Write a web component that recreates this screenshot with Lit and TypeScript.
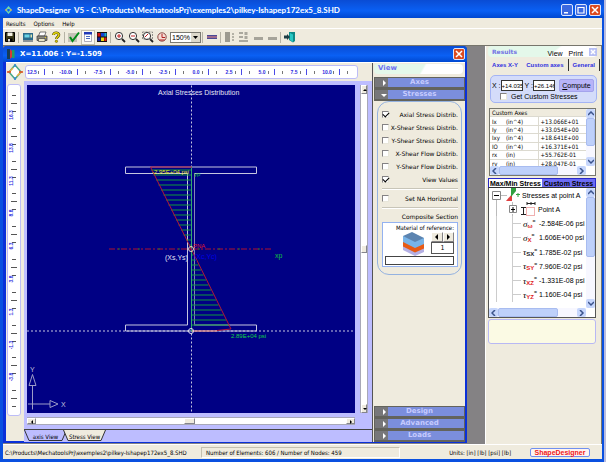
import { LitElement, html, svg, css } from "lit";
import { customElement, property } from "lit/decorators.js";
import { classMap } from "lit/directives/class-map.js";

const range = (n: number) => Array.from({ length: n }, (_, i) => i);
const STEP = 32.8;

const base = css`
  * { box-sizing: border-box; }
  button, input, select {
    font: inherit; color: inherit; margin: 0; padding: 0; border: 0;
    background: none; border-radius: 0; outline: 0;
  }
  svg { display: block; }
`;

const checkbox = css`
  input[type="checkbox"] {
    appearance: none; width: 7px; height: 7px; flex: none; background: #fff;
    border: 1px solid; border-color: #848284 #e8e6da #e8e6da #848284;
    display: grid; place-items: center;
  }
  input[type="checkbox"]:checked::before {
    content: ""; width: 5px; height: 3px; margin-top: -1px;
    border-left: 1px solid #000; border-bottom: 1px solid #000;
    transform: rotate(-45deg);
  }
`;

const lens = (inner: unknown) => svg`
  <circle cx="5" cy="5" r="3.6" fill="#fff" stroke="#333" stroke-width="1"/>
  <path d="M8 8l3 3" stroke="#222" stroke-width="1.8"/>${inner}`;

const icons: Record<string, unknown> = {
  save: svg`<path d="M1.500 1.500h9v9h-9z" fill="#3a3818" stroke="#000"/><path d="M3.500 1.500h5v3.500h-5z" fill="#f4f2e4"/><path d="M3.500 7.500h5v3h-5z" fill="#000"/><path d="M4 8h2v2.500H4z" fill="#ddd"/>`,
  screen: svg`<path d="M1 2h10v7H1z" fill="#2a6a8c"/><path d="M2.500 3.500h5v3h-5z" fill="#69d4e6"/><path d="M8.500 3.500h1.500v3H8.500z" fill="#dfe8b0"/><path d="M1 9.500h10v1H1z" fill="#26394f"/>`,
  print: svg`<path d="M4 1h6L8.500 5H2.500z" fill="#fff" stroke="#444" stroke-width=".7"/><path d="M1 5h10v4.500H1z" fill="#8c8a80" stroke="#333" stroke-width=".7"/><path d="M2.500 7.500h6.500v3H2.500z" fill="#e8e4c8" stroke="#333" stroke-width=".6"/><path d="M9 6h1v1H9z" fill="#e8d020"/>`,
  help: svg`<path d="M3.500 4C3.500 1 9 1 9 3.800 9 5.600 6.400 5.800 6.400 8" fill="none" stroke="#4a4200" stroke-width="2.600"/><path d="M3.500 4C3.500 1 9 1 9 3.800 9 5.600 6.400 5.800 6.400 8" fill="none" stroke="#e8dc10" stroke-width="1.400"/><circle cx="6.400" cy="10.300" r="1.200" fill="#d8c800" stroke="#4a4200" stroke-width=".5"/>`,
  check: svg`<path d="M0 2h9v9H0z" fill="#c4c2b6"/><path d="M2 6l2.500 4L11 1.500" fill="none" stroke="#008a18" stroke-width="2"/>`,
  doc: svg`<path d="M2.500 1.500h7v9h-7z" fill="#fff" stroke="#9a98a8" stroke-width=".8"/><path d="M2 1h8v2.500H2z" fill="#2038b8"/><path d="M4 5h4v1H4zM4 7h4v1H4z" fill="#4a6ac0"/>`,
  colors: svg`<path d="M1 1h10v10H1z" fill="#111"/><path d="M1.500 2h3v3.500h-3z" fill="#d01010"/><path d="M5 2h3v3.500H5z" fill="#1040d8"/><path d="M8.300 2h2.200v3.500H8.300z" fill="#18a8d8"/><path d="M1.500 6.500h3V10h-3z" fill="#1020a0"/><path d="M5 6.500h3V10H5z" fill="#e8d810"/><path d="M8.300 6.500h2.200V10H8.300z" fill="#e02010"/>`,
  zoomIn: lens(svg`<path d="M3 5h4M5 3v4" stroke="#c02020"/>`),
  zoomOut: lens(svg`<path d="M3 5h4" stroke="#c02020"/>`),
  zoomBox: lens(svg`<path d="M0.500 1h10v7h-10z" fill="none" stroke="#666" stroke-width=".7" stroke-dasharray="2 1"/><path d="M3 6l3-3" stroke="#c02020"/>`),
  zoomAll: svg`<circle cx="6" cy="6" r="4.200" fill="#f6dcd4" stroke="#8a4a44" stroke-width="1"/><path d="M6 3v3.500h3M3.500 9h5" fill="none" stroke="#b02020"/>`,
  beam: svg`<path d="M1 4h10v4H1z" fill="#4a4a98"/><path d="M1 5.500h10v1H1z" fill="#f08880"/>`,
  alignA: svg`<path d="M1 1h5v10H1z" fill="#9c9a90"/><path d="M8 2h2v2H8zM8 5h2v2H8zM8 8h2v2H8z" fill="#b4b2a6"/>`,
  alignB: svg`<path d="M1 1h4v2H1zM1 5h4v2H1zM1 9h9v2H1zM6.500 1h3v3h-3zM6.500 5h3v3h-3z" fill="#aaa89e"/>`,
  flat: svg`<path d="M2 6h9v3H2z" fill="#a6a49a"/>`,
  exit: svg`<path d="M5 1h6v9l-2 1.500L5 9z" fill="#0c8a88"/><path d="M6 2l3 1.500v7.500L6 9z" fill="#28c8c4"/><path d="M0 4.500h3V3l3 3-3 3V7.500H0z" fill="#1c3c44"/>`,
};

@customElement("tool-bar")
class ToolBar extends LitElement {
  static styles = [base, css`
    :host { display: flex; align-items: center; height: 17px; background: #efebde; border-top: 1px solid #fff; }
    button { width: 14px; height: 15px; display: grid; place-items: center; flex: none; }
    .on { background: #faf8f2; border: 1px solid #c4c0b0; }
    .sep { width: 1px; height: 11px; margin: 0 2px 0 1px; background: #b5b2a5; flex: none; }
    .zoom { display: flex; width: 31px; height: 11px; margin-left: 1px; border: 1px solid #7b7a72; background: #fff; flex: none; }
    select { appearance: none; flex: 1; min-width: 0; padding-left: 1px; font: 7px/9px "Liberation Sans", sans-serif; }
    .arrow { width: 9px; background: #ddd9cb; display: grid; place-items: center; }
  `];
  private items: (string[] | null)[] = [
    ["save", "Save"], null, ["screen", "Screen"], ["print", "Print"], ["help", "Help"], null,
    ["check", "Check"], ["doc", "Report"], ["colors", "Colors"], null,
    ["zoomIn", "Zoom in"], ["zoomOut", "Zoom out"], ["zoomBox", "Zoom window"], ["zoomAll", "Zoom all"], ["select"], null,
    ["beam", "Beam"], null, ["alignA", "Columns"], ["alignB", "List"], ["flat", "Top"], ["flat", "Bottom"], null, ["exit", "Exit"],
  ];
  render() {
    return this.items.map((it) => {
      if (!it) return html`<span class="sep"></span>`;
      if (it[0] === "select") return html`<span class="zoom"><select aria-label="Zoom level"><option>150%</option><option>100%</option></select>
        <span class="arrow"><svg width="5" height="3"><path d="M0 0h5L2.500 3z"/></svg></span></span>`;
      return html`<button class=${classMap({ on: it[0] === "doc" })} aria-label=${it[1]}><svg width="12" height="12" viewBox="0 0 12 12">${icons[it[0]]}</svg></button>`;
    });
  }
}

@customElement("stress-canvas")
class StressCanvas extends LitElement {
  static styles = [base, css`
    :host { display: block; background: #000084; overflow: hidden; min-height: 0; }
    svg { width: 100%; height: 100%; font-family: "Liberation Sans", Arial, sans-serif; font-size: 7px; }
    .value { font-size: 6px; }
  `];
  render() {
    const upper = range(16).map((i) => 169 + i * 5);
    const lower = range(15).map((i) => 254 + i * 5);
    return html`<svg viewBox="27 85 328 327">
      <g fill="none" stroke="#c6c6e0" stroke-width="1">
        <path d="M191.500 85v327M27 330.500h328" stroke-dasharray="2 2"/>
        <path d="M125.500 166.500h131v6.500H194.500V324.500h62v6h-131v-6H187.500V173h-62z"/>
        <path d="M194.500 173v152" stroke="#8484b4"/>
      </g>
      <g stroke="#10983c" stroke-width="1">
        <path d="M191.500 166v165" stroke="#30a870"/>
        ${upper.map((y) => svg`<path d=${`M${191 - (249 - y) * 0.5} ${y + 0.5}H191`}/>`)}
        ${lower.map((y) => svg`<path d=${`M192 ${y + 0.5}H${191 + (y - 249) * 0.5}`}/>`)}
      </g>
      <path d="M192 166.500H150.500L231 328.500l-14 1.500" fill="none" stroke="#b01838"/>
      <path d="M192 330.500h25" stroke="#f08070"/>
      <path d="M109 248.500h164" stroke="#b01030" stroke-dasharray="6 2 2 2"/>
      <path d="M118 248.500h155" stroke="#108030" stroke-dasharray="2 18"/>
      <circle cx="191" cy="248.500" r="2.500" fill="none" stroke="#e0d0c0"/>
      <circle cx="191" cy="330.500" r="2.500" fill="none" stroke="#e0e0f0"/>
      <text x="158" y="94" fill="#e4e4f4">Axial Stresses Distribution</text>
      <text class="value" x="152" y="173" fill="#e4f020">-2.95E+04 psi</text>
      <text class="value" x="194" y="175" fill="#10c040">yp</text>
      <text class="value" x="193" y="247" fill="#e01830">PNA</text>
      <text x="165" y="259" fill="#e4e4f4">(Xs,Ys)</text>
      <text x="194" y="258" fill="#0000e8">(Xc,Yc)</text>
      <text x="275" y="257" fill="#10c040">xp</text>
      <text class="value" x="231" y="337" fill="#10d048">2.89E+04 psi</text>
      <g fill="none" stroke="#9c9cc8">
        <path d="M32.500 409V385M29 385l3.500-11 3.500 11zM28 403.500h22M50 400v7l8-3.500z"/>
      </g>
      <text x="30" y="371" fill="#c0c0dc">Y</text>
      <text x="61" y="406" fill="#c0c0dc">X</text>
    </svg>`;
  }
}

@customElement("axis-ruler")
class AxisRuler extends LitElement {
  @property({ type: Boolean }) vertical = false;
  static styles = [base, css`
    :host { display: block; background: #fff; border: 1px solid #bdbdf7; border-radius: 3px; overflow: hidden; }
    text { font: bold 5px "Liberation Sans", sans-serif; fill: #2a2ae0; text-anchor: middle; }
  `];
  render() {
    if (this.vertical) {
      const labels = ["16.3", "13.8", "11.3", "8.8", "6.3", "3.8", "1.3", "-1.3", "-3.8"];
      return html`<svg width="12" height="330">
        ${range(10).map((i) => { const y = 18 + Math.round(i * STEP); return svg`<path d=${`M3 ${y + 0.5}h6M4 ${y - 7.5}h4M4 ${y + 8.5}h4`} stroke="#555"/>`; })}
        ${labels.map((t, i) => svg`<text transform=${`translate(5 ${30 + Math.round(i * STEP)}) rotate(-90)`}>${t}</text>`)}
      </svg>`;
    }
    const labels = ["12.5", "-10.0", "-7.5", "-5.0", "-2.5", "0.0", "2.5", "5.0", "7.5", "10.0"];
    return html`<svg width="330" height="12">
      ${range(10).map((i) => { const x = 18 + Math.round(i * STEP); return svg`<path d=${`M${x + 0.5} 3v6`} stroke="#4a4ae8"/><path d=${`M${x + 8.5} 5v3M${x - 5.5} 5v3`} stroke="#777"/>`; })}
      ${labels.map((t, i) => svg`<text x=${6 + Math.round(i * STEP)} y="8">${t}</text>`)}
    </svg>`;
  }
}

@customElement("view-panel")
class ViewPanel extends LitElement {
  static styles = [base, checkbox, css`
    :host { display: flex; flex-direction: column; background: #efebde; font: 6px/9px "DejaVu Sans Condensed", "Noto Sans", sans-serif; padding: 1px 0 0 1px; }
    h2 { margin: 0 2px 3px 0; height: 10px; padding-left: 4px; font: bold 7px/9px "DejaVu Sans", sans-serif; color: #7070f0; background: linear-gradient(120deg, #e4f8ea 44px, #fff 46px); border-radius: 4px; }
    .bar { height: 12px; width: 100%; flex: none; display: flex; align-items: center; background: #7b8edc; border: 1px solid #63635c; border-bottom-width: 2px; color: #c6cbff; font: bold 7px/9px "DejaVu Sans", sans-serif; }
    .bar .grip { width: 13px; align-self: stretch; background: #77777a; display: grid; place-items: center; padding-left: 4px; }
    .bar .name { flex: 1; text-align: center; padding-right: 13px; }
    .group { margin: 0 3px; padding: 6px 3px 7px 4px; border: 1px solid #94b2e0; border-radius: 12px; }
    .row { display: flex; align-items: center; justify-content: space-between; height: 13px; white-space: nowrap; font-family: "DejaVu Sans", sans-serif; }
    hr { border: 0; border-top: 1px solid #c8c5b8; border-bottom: 1px solid #fff; margin: 2px 0; }
    .cap { text-align: right; height: 9px; margin: 3px 0 1px; font-family: "DejaVu Sans", sans-serif; }
    .mat { height: 45px; border: 1px solid #94b2f0; background: #fff; padding: 1px 3px 2px 2px; display: flex; flex-direction: column; }
    .mat .t { line-height: 8px; text-align: right; white-space: nowrap; }
    .mid { display: flex; justify-content: flex-end; gap: 6px; flex: 1; }
    .spin { width: 23px; display: grid; grid-template-columns: 1fr 1fr; grid-template-rows: 10px 12px; }
    .spin button { background: #efebde; border: 1px solid; border-color: #fff #848284 #848284 #fff; display: grid; place-items: center; }
    .spin input { grid-column: 1 / 3; width: 100%; min-width: 0; border: 1px solid #555; text-align: center; font-size: 7px; }
    .name-box { width: 100%; height: 9px; border: 1px solid #444; flex: none; }
    .fill { flex: 1; }
  `];
  private bar(name: string, open = false) {
    return html`<button class="bar"><span class="grip"><svg width="6" height="6"><path d=${open ? "M0 2h6L3 5z" : "M2 0v6l3-3z"} fill="#fff"/></svg></span><span class="name">${name}</span></button>`;
  }
  render() {
    const opts: [string, boolean][] = [["Axial Stress Distrib.", true], ["X-Shear Stress Distrib.", false], ["Y-Shear Stress Distrib.", false], ["X-Shear Flow Distrib.", false], ["Y-Shear Flow Distrib.", false], ["View Values", true]];
    return html`<h2>View</h2>
      ${this.bar("Axes")}${this.bar("Stresses", true)}
      <div class="group">
        ${opts.map(([t, c]) => html`<label class="row"><input type="checkbox" .checked=${c}>${t}</label>`)}
        <hr><label class="row"><input type="checkbox">Set NA Horizontal</label><hr>
        <div class="cap">Composite Section</div>
        <div class="mat">
          <div class="t">Material of reference:</div>
          <div class="mid">
            <svg width="24" height="24" viewBox="0 0 24 24">
              <path d="M2 13v5l12 6 9-4v-5l-9 3z" fill="#b4b0e4"/>
              <path d="M2 9v5.500l12 6 9-4V12z" fill="#e85a14"/>
              <path d="M2 4v6l12 6 9-4V6z" fill="#78b4e8"/>
              <path d="M2 4l9-4 12 6-9 4z" fill="#5c84b0"/>
            </svg>
            <div class="spin">
              <button aria-label="Previous"><svg width="3" height="6"><path d="M3 0v6L0 3z"/></svg></button>
              <button aria-label="Next"><svg width="3" height="6"><path d="M0 0v6l3-3z"/></svg></button>
              <input aria-label="Material number" value="1">
            </div>
          </div>
          <input class="name-box" aria-label="Material name">
        </div>
      </div>
      <div class="fill"></div>
      ${["Design", "Advanced", "Loads"].map((n) => this.bar(n))}`;
  }
}

@customElement("scroll-strip")
class ScrollStrip extends LitElement {
  @property({ type: Boolean }) vertical = false;
  @property({ type: Boolean }) classic = false;
  @property({ type: Number }) before = 0;
  @property({ type: Number }) size = 50;
  static styles = [base, css`
    :host { display: flex; background: #f7f7ff; height: 9px; flex: none; }
    :host([vertical]) { flex-direction: column; width: 9px; height: auto; }
    button { flex: none; width: 9px; height: 9px; background: #c6d6fc; border-radius: 2px; display: grid; place-items: center; }
    .track { flex: 1; display: flex; flex-direction: inherit; min-height: 0; }
    .thumb { background: #bed0fa; border: 1px solid #a8bcf0; border-radius: 2px; }
    :host([classic]) { background: #fff; height: 8px; border: 1px solid #a8a8b8; border-width: 1px 0; }
    :host([classic][vertical]) { width: 8px; height: auto; border-width: 0 1px; }
    :host([classic]) button, :host([classic]) .thumb { background: #efebde; border: 1px solid; border-color: #fff #84848c #84848c #fff; border-radius: 0; }
    :host([classic]) button { height: 100%; }
    :host([classic][vertical]) button { width: 100%; height: 9px; }
  `];
  private tip(back: boolean) {
    const soft = ["M0 4l3-3 3 3", "M0 1l3 3 3-3", "M4 0L1 3l3 3", "M1 0l3 3-3 3"];
    const hard = ["M1 4h4L3 2z", "M1 2h4L3 4z", "M4 1v4L2 3z", "M2 1v4l2-2z"];
    const k = (this.vertical ? 0 : 2) + (back ? 0 : 1);
    return this.classic
      ? html`<svg width="6" height="6"><path d=${hard[k]}/></svg>`
      : html`<svg width="6" height="6"><path d=${soft[k]} fill="none" stroke="#3c548c" stroke-width="1.500"/></svg>`;
  }
  render() {
    return html`<button aria-label="Scroll back">${this.tip(true)}</button>
      <div class="track"><span style="flex:${this.before}"></span><span class="thumb" style="flex:${this.size}"></span><span style="flex:${100 - this.before - this.size}"></span></div>
      <button aria-label="Scroll forward">${this.tip(false)}</button>`;
  }
}

@customElement("results-dock")
class ResultsDock extends LitElement {
  static styles = [base, checkbox, css`
    :host { display: flex; flex-direction: column; background: #efebde; border-left: 1px solid #fff; border-right: 1px solid #77776e; padding: 0 4px 0 2px; font: 7px/9px "Liberation Sans", Arial, sans-serif; }
    header { display: flex; align-items: center; height: 11px; flex: none; padding: 0 0 0 4px; gap: 6px; border-radius: 4px; background: linear-gradient(140deg, #e4f8ea 46px, #fff 48px); }
    h2 { margin: 0; flex: 1; font: bold 6px/9px "DejaVu Sans", sans-serif; color: #7474e4; }
    header button { padding-top: 4px; }
    .x { width: 8px; height: 8px; padding: 1px; background: #b8c0f4; }
    header .x { padding-top: 1px; }
    .tabs { display: flex; height: 16px; flex: none; align-items: stretch; margin: 0 -3px 2px 0; font: bold 6px/12px "Liberation Sans", sans-serif; color: #3030e0; }
    .tabs button { flex: 1 1 auto; white-space: nowrap; border-right: 1px solid #333; margin: 2px 0; }
    .tabs button:first-child { border: 0; }
    .form { margin: 0 0 5px 2px; padding: 3px 2px 2px 1px; height: 28px; flex: none; border: 1px solid #a4b4f4; border-radius: 5px; background: #d4dcfa; display: grid; grid-template-columns: 1fr 35px; }
    .xy { display: flex; align-items: center; gap: 2px; white-space: nowrap; }
    .xy label { display: flex; align-items: center; }
    .xy input { width: 22px; height: 11px; background: #fff; border: 1px solid #333; font-size: 6px; min-width: 0; }
    .go { background: #b8b4f8; border: 1px solid #a4a4ec; border-radius: 2px; height: 13px; }
    .get { grid-column: 1 / 3; display: flex; align-items: center; gap: 4px; padding-left: 8px; white-space: nowrap; }
    .grid { height: 68px; flex: none; margin: 0 1px 2px 1px; border: 1px solid #77776e; background: #fff; display: grid; grid-template-columns: 1fr 9px; grid-template-rows: 1fr 9px; }
    .clip { overflow: hidden; min-height: 0; }
    table { width: 100%; height: 59px; border-collapse: collapse; font: 6px/7px "DejaVu Sans Condensed", "Noto Sans", sans-serif; }
    td, th { padding: 0 0 0 2px; text-align: left; font-weight: normal; border-bottom: 1px solid #dcdad0; white-space: nowrap; }
    th { background: #efebde; }
    td:nth-child(1) { width: 14px; } td:nth-child(2) { width: 34px; border-right: 1px solid #dcdad0; }
    .two { display: flex; height: 10px; flex: none; margin: 0 1px 0 0; font: bold 7px/9px "Liberation Sans", sans-serif; border: 1px solid #2828c8; border-bottom-color: #333; }
    .two button { flex: 1; white-space: nowrap; background: #fff; }
    .two button + button { background: #6c6cf4; }
    .tree { height: 130px; flex: none; margin: 0 1px 1px 0; border: 1px solid #555; border-top: 0; background: #fff; display: grid; grid-template-columns: 1fr 9px; grid-template-rows: 1fr 9px; }
    .nodes { display: flex; flex-direction: column; min-width: 0; padding-bottom: 6px; overflow: hidden; }
    .nodes div { flex: 1; min-height: 0; display: flex; align-items: center; white-space: nowrap; }
    .nodes svg { flex: none; }
    .note { height: 25px; flex: none; margin-right: 1px; border: 1px solid #b8b8f4; border-radius: 3px; background: #fbfae4; }
    .sym { width: 16px; flex: none; font: italic 9px/10px "Liberation Serif", serif; display: flex; align-items: center; }
    .sub { font: bold 6px/7px "Liberation Sans", sans-serif; color: #e02020; padding-top: 5px; }
    .sub.dark { color: #222; }
    .eq { font: bold 5px/7px "Liberation Sans", sans-serif; padding-bottom: 4px; }
  `];
  render() {
    const rows = [["Ix", "(in^4)", "+13.066E+01"], ["Iy", "(in^4)", "+33.054E+00"], ["Ixy", "(in^4)", "+18.641E+00"], ["IO", "(in^4)", "+16.371E+01"], ["rx", "(in)", "+55.762E-01"], ["ry", "(in)", "+28.047E-01"]];
    const vals = [["σ", "ω", "-2.584E-06 psi"], ["σ", "X", "1.606E+00 psi"], ["τ", "SX", "1.785E-02 psi"], ["τ", "SY", "7.960E-02 psi"], ["τ", "XZ", "-1.331E-08 psi"], ["τ", "YZ", "1.160E-04 psi"]];
    return html`
      <header><h2>Results</h2><button>View</button><button>Print</button><button class="x" aria-label="Close"><svg width="6" height="6"><path d="M1 1l4 4M5 1L1 5" stroke="#fff" stroke-width="1.500"/></svg></button></header>
      <nav class="tabs"><button>Axes X-Y</button><button>Custom axes</button><button>General</button></nav>
      <div class="form">
        <div class="xy"><label>X :<input value="+14.035"></label><label>Y :<input value="+26.146"></label></div>
        <button class="go"><u>C</u>ompute</button>
        <label class="get"><input type="checkbox">Get Custom Stresses</label>
      </div>
      <div class="grid">
        <div class="clip"><table><tr><th colspan="3">Custom Axes</th></tr>${rows.map((r) => html`<tr>${r.map((c) => html`<td>${c}</td>`)}</tr>`)}</table></div>
        <scroll-strip vertical .before=${0} .size=${70}></scroll-strip>
        <scroll-strip .before=${0} .size=${75}></scroll-strip>
      </div>
      <div class="two"><button>Max/Min Stress</button><button>Custom Stress</button></div>
      <div class="tree">
        <div class="nodes">
          <div><svg width="33" height="14"><path d="M7.500 11v3M12 7.500h6" stroke="#bbb"/><path d="M3.500 3.500h8v8h-8z" fill="#fff" stroke="#888"/><path d="M5 7.500h5" stroke="#000"/><path d="M17 13l6-7v7z" fill="#e04040"/><path d="M22 0h5v3l-5 6z" fill="#30a040"/><path d="M27 6.500h4M29 5v4" stroke="#30a040"/></svg>Stresses at point A</div>
          <div><svg width="49" height="14"><path d="M7.500 0v14M23.500 0v3M23.500 12v2" stroke="#bbb"/><path d="M20.500 3.500h7v7h-7z" fill="#fff" stroke="#888"/><path d="M22 7.500h4M24 5v5" stroke="#000"/><path d="M37.500 5.500h8v8h-8z" fill="none" stroke="#e06060" stroke-dasharray="1 1"/><path d="M38 1.500h8M38 0v3M42 0v3M46 0v3M32 5.500h5M32 12.500h5M34.500 6v7" stroke="#222"/></svg>Point A</div>
          ${vals.map(([s, sub, v]) => html`<div><svg width="34" height="15"><path d="M7.500 0v15M23.500 0v15M24 7.500h8" stroke="#ccc"/></svg><span class="sym">${s}<span class=${classMap({ sub: true, dark: sub === "SX" })}>${sub}</span><span class="eq">=</span></span>${v}</div>`)}
        </div>
        <scroll-strip vertical .before=${0} .size=${58}></scroll-strip>
        <scroll-strip .before=${0} .size=${75}></scroll-strip>
      </div>
      <div class="note"></div>`;
  }
}

@customElement("app-root")
class AppRoot extends LitElement {
  static styles = [base, css`
    :host { box-sizing: border-box; display: flex; flex-direction: column; height: 100vh; background: #0a50e0; border-right: 2px solid #b8bce0; padding: 0 2px 3px 3px; font: 6px/9px "DejaVu Sans Condensed", "Noto Sans", sans-serif; color: #000; overflow: hidden; }
    .title { height: 18px; flex: none; margin: 0 -2px 0 -3px; padding: 2px 3px 0 5px; display: flex; align-items: center; gap: 2px; color: #fff; font: bold 8px/12px Lato, sans-serif; white-space: nowrap; background: linear-gradient(#0a4cd4, #0a60f4 60%, #0048d0); }
    .title h1 { flex: 1; min-width: 0; margin: 0 0 0 3px; font: inherit; overflow: hidden; white-space: pre; }
    .title button { width: 12px; height: 12px; border: 1px solid #dce6ff; border-radius: 2px; background: #3a68e0; display: grid; place-items: center; }
    .title .close { background: #dc4a20; }
    .menu { height: 10px; flex: none; display: flex; gap: 8px; padding-left: 3px; background: #efebde; }
    .work { flex: 1; min-height: 0; display: flex; background: #848284; border-top: 1px solid #77756c; }
    .mdi { flex: 1; min-width: 0; margin: 0 18px 1px 0; padding: 0 2px 2px 3px; background: #0a30d8; border-radius: 4px 4px 0 0; display: flex; flex-direction: column; }
    .mdi .title { height: 16px; padding: 0 2px 0 4px; border-radius: 4px 4px 0 0; }
    .mdi .title h1 { font: bold 7px/12px "DejaVu Sans", sans-serif; }
    .body { flex: 1; min-height: 0; display: grid; grid-template-columns: 1fr 92px; background: #efebde; border-top: 1px solid #fff; }
    .draw { display: grid; grid-template-columns: 18px minmax(0, 1fr); grid-template-rows: 18px minmax(0, 1fr); min-width: 0; border-right: 1px solid #555; }
    .compass { display: grid; place-items: center; }
    .top { margin: 2px 14px 2px 1px; }
    .left { margin: 3px 3px 26px 1px; }
    .stage { background: #bdbdff; display: grid; grid-template-columns: minmax(0, 1fr) 8px; grid-template-rows: minmax(0, 1fr) 8px 13px; column-gap: 5px; padding: 4px 4px 0 3px; row-gap: 4px; min-height: 0; }
    .sheets { grid-column: 1 / 3; margin: 0 -4px 0 -3px; border-top: 1px solid #444; display: flex; height: 12px; line-height: 9px; }
    .sheets button { width: 43px; margin-right: -4px; display: grid; place-items: center; }
    .sheets svg { grid-area: 1 / 1; } .sheets span { grid-area: 1 / 1; z-index: 1; }
    results-dock { width: 117px; flex: none; }
    .status { height: 15px; flex: none; display: flex; align-items: center; background: #efebde; border-top: 1px solid #fff; white-space: nowrap; padding-left: 2px; }
    .status .path { width: 196px; }
    .status .count { width: 199px; height: 11px; padding-left: 4px; border: 1px solid; border-color: #c4c0b0 #fff #fff #c4c0b0; }
    .status .units { flex: 1; text-align: right; margin-right: 19px; }
    .status .brand { width: 60px; height: 9px; margin-right: 12px; border: 1px solid #7090f0; border-radius: 2px; color: #f01818; font: bold 7px/7px "Liberation Sans", sans-serif; background: #fff4f0; }
  `];
  render() {
    return html`
      <div class="title">
        <svg width="7" height="8" viewBox="0 0 7 8"><path d="M3.500 1L6 4 3.500 7 1 4z" fill="none" stroke="#70d8a8" stroke-width="1.300"/><path d="M0 4h2M5 4h2" stroke="#f0a040"/></svg>
        <h1>ShapeDesigner  V5 - C:\\Products\\MechatoolsPrj\\exemples2\\pilkey-Ishapep172ex5_8.SHD</h1>
        <button aria-label="Minimize"><svg width="8" height="8"><path d="M1 6h4v1.500H1z" fill="#fff"/></svg></button>
        <button aria-label="Maximize"><svg width="8" height="8"><path d="M1 1.500h6v5.500H1z" fill="none" stroke="#fff" stroke-width="1.200"/></svg></button>
        <button class="close" aria-label="Close"><svg width="8" height="8"><path d="M1 1l6 6M7 1L1 7" stroke="#fff" stroke-width="1.500"/></svg></button>
      </div>
      <nav class="menu"><button>Results</button><button>Options</button><button>Help</button></nav>
      <tool-bar></tool-bar>
      <div class="work">
        <section class="mdi">
          <div class="title">
            <svg width="8" height="10" viewBox="0 0 8 10"><path d="M0 0h3v10H0z" fill="#163c58"/><path d="M3 0l2 2v6L3 10z" fill="#d83838"/><path d="M5 1h2.500v8H5z" fill="#20a060"/></svg>
            <h1>X=11.006 : Y=-1.509</h1>
            <button class="close" aria-label="Close drawing"><svg width="8" height="8"><path d="M1 1l6 6M7 1L1 7" stroke="#fff" stroke-width="1.500"/></svg></button>
          </div>
          <div class="body">
            <div class="draw">
              <div class="compass"><svg width="16" height="16" viewBox="0 0 16 16"><path d="M8 1l6 7-6 7-6-7z" fill="#fff" stroke="#48a888" stroke-width="1.500"/><path d="M2 8l4-4M14 8l-4 4" stroke="#e8b040" stroke-width="1.500"/><path d="M0 8h4M12 8h4" stroke="#e04818" stroke-width="1.500"/><path d="M8 0v3M8 13v3" stroke="#3888d8" stroke-width="1.500"/></svg></div>
              <axis-ruler class="top"></axis-ruler>
              <axis-ruler class="left" vertical></axis-ruler>
              <div class="stage">
                <stress-canvas></stress-canvas>
                <scroll-strip classic vertical .before=${49} .size=${2}></scroll-strip>
                <scroll-strip classic .before=${48} .size=${3}></scroll-strip>
                <div class="sheets">
                  ${["axis View", "Stress View"].map((t, i) => html`<button><svg width="43" height="12"><path d="M0.500 0L5 10.500h33L42.500 0" fill=${i ? "#efebde" : "#bdbdff"} stroke="#333"/></svg><span>${t}</span></button>`)}
                </div>
              </div>
            </div>
            <view-panel></view-panel>
          </div>
        </section>
        <results-dock></results-dock>
      </div>
      <footer class="status">
        <span class="path">C:\\Products\\MechatoolsPrj\\exemples2\\pilkey-Ishapep172ex5_8.SHD</span>
        <span class="count">Number of Elements: 606 / Number of Nodes: 459</span>
        <span class="units">Units: [in] [lb] [psi] [lb]</span>
        <button class="brand">ShapeDesigner</button>
      </footer>`;
  }
}
